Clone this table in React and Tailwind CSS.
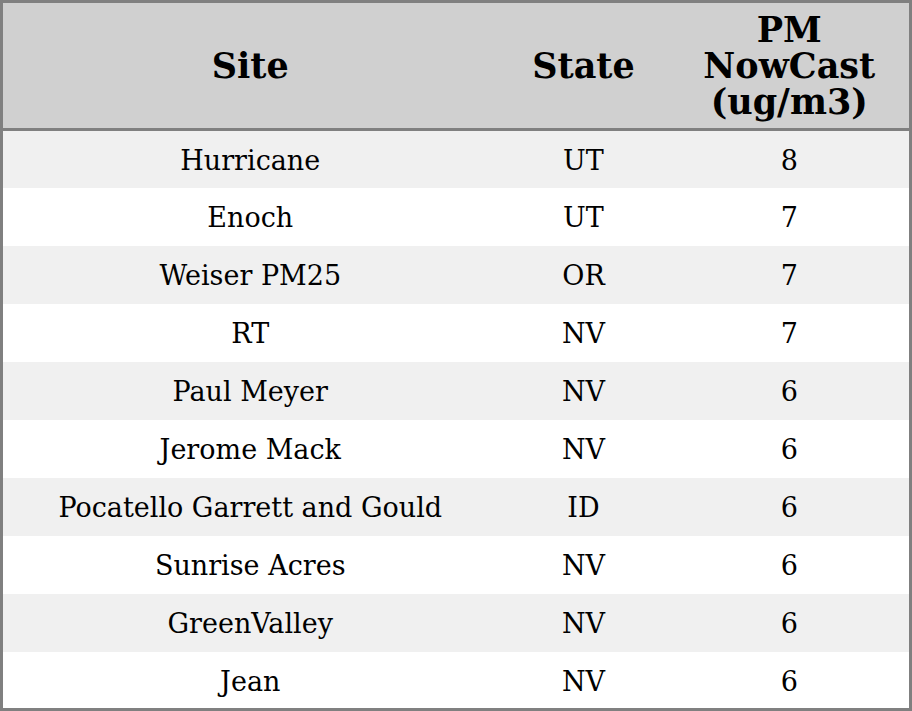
const ROWS = [
  { site: "Hurricane", state: "UT", pm: 8 },
  { site: "Enoch", state: "UT", pm: 7 },
  { site: "Weiser PM25", state: "OR", pm: 7 },
  { site: "RT", state: "NV", pm: 7 },
  { site: "Paul Meyer", state: "NV", pm: 6 },
  { site: "Jerome Mack", state: "NV", pm: 6 },
  { site: "Pocatello Garrett and Gould", state: "ID", pm: 6 },
  { site: "Sunrise Acres", state: "NV", pm: 6 },
  { site: "GreenValley", state: "NV", pm: 6 },
  { site: "Jean", state: "NV", pm: 6 },
];

export default function App() {
  return (
    <div className="w-[912px] h-[711px] bg-white font-['DejaVu_Serif',serif] text-black">
      <table className="w-full h-full border-collapse border-3 border-[#808080] table-fixed">
        <colgroup>
          <col className="w-[496px]" />
          <col className="w-[172px]" />
          <col />
        </colgroup>
        <thead>
          <tr className="bg-[#d0d0d0] h-[128px] border-b-3 border-[#808080]">
            <th className="text-[35px] font-bold leading-[36px]">Site</th>
            <th className="text-[35px] font-bold leading-[36px]">State</th>
            <th className="text-[35px] font-bold leading-[36px]">
              PM
              <br />
              NowCast
              <br />
              (ug/m3)
            </th>
          </tr>
        </thead>
        <tbody>
          {ROWS.map((row, i) => (
            <tr
              key={i}
              className={`h-[58px] text-[27px] ${i % 2 === 0 ? "bg-[#f0f0f0]" : "bg-white"}`}
            >
              <td className="text-center pt-1">{row.site}</td>
              <td className="text-center pt-1">{row.state}</td>
              <td className="text-center pt-1">{row.pm}</td>
            </tr>
          ))}
        </tbody>
      </table>
    </div>
  );
}
